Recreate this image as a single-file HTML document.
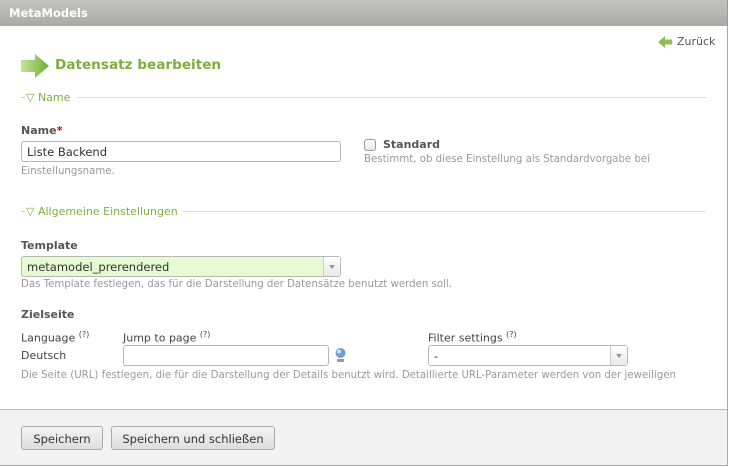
<!DOCTYPE html>
<html><head><meta charset="utf-8"><style>
*{box-sizing:border-box;margin:0;padding:0}
body{width:730px;height:467px;background:#fff;font-family:"DejaVu Sans","Liberation Sans",sans-serif;font-size:11px;color:#444;position:relative;overflow:hidden}
.a{position:absolute;white-space:nowrap}
.hdr{left:0;top:0;width:728px;height:26px;background:linear-gradient(#c4c4c2,#a9a9a7);color:#fff;font-weight:bold;font-size:11.5px;padding:6px 0 0 9px;border-right:1px solid #999}
.frame{left:0;top:26px;width:728px;height:440px;border-right:1px solid #aaa;border-bottom:1px solid #aaa}
.leg{color:#7fae3f;font-size:11px}
.line{height:1px;background:#ddd}
.lbl{font-weight:bold;color:#555;font-size:11px}
.tip{color:#999;font-size:10.2px}
.inp{border:1px solid #b7b7b7;border-radius:3px;background:#fff;height:21px;font-size:11.5px;color:#333;padding:3px 0 0 5px}
.sel .arr{position:absolute;right:0;top:0;width:17px;height:19px;border-left:1px solid #ccc;background:linear-gradient(#fff,#e9e9e9)}
.sel .arr:after{content:"";position:absolute;left:5px;top:8px;border:3px solid transparent;border-top:4px solid #999}
.btn{border:1px solid #aaa;border-radius:3px;background:linear-gradient(#f4f4f4,#dedede);height:24px;font-size:11.5px;color:#333;text-align:center;padding-top:5px}
sup{font-size:8px}
</style></head><body>
<div class="a hdr">MetaModels</div>
<div class="a frame"></div>
<svg class="a" style="left:658px;top:36px" width="14" height="12"><path d="M0 6 L7 0 V3.5 H14 V8.5 H7 V12 Z" fill="#8cc152"/></svg>
<div class="a" style="left:677px;top:35px;color:#555">Zurück</div>
<svg class="a" style="left:20px;top:53px" width="30" height="26"><defs><linearGradient id="g" x1="0" x2="1"><stop offset="0" stop-color="#c4e59a"/><stop offset="1" stop-color="#6fae2f"/></linearGradient></defs><path d="M1 7 H15 V1 L29 13 L15 25 V19 H1 Z" fill="url(#g)"/></svg>
<div class="a" style="left:55px;top:57px;color:#7fae3f;font-weight:bold;font-size:13.6px">Datensatz bearbeiten</div>
<div class="a line" style="left:21px;top:97px;width:4px;background:#ccc"></div>
<div class="a leg" style="left:26px;top:91px">▽ Name</div>
<div class="a line" style="left:77px;top:97px;width:629px"></div>
<div class="a lbl" style="left:21px;top:124px">Name<span style="color:#e00">*</span></div>
<div class="a inp" style="left:21px;top:141px;width:320px">Liste Backend</div>
<div class="a tip" style="left:21px;top:166px">Einstellungsname.</div>
<div class="a" style="left:364px;top:139px;width:12px;height:12px;border:1px solid #999;border-radius:3px;background:linear-gradient(#fff,#e6e6e6)"></div>
<div class="a lbl" style="left:383px;top:138px">Standard</div>
<div class="a tip" style="left:364px;top:154px">Bestimmt, ob diese Einstellung als Standardvorgabe bei</div>
<div class="a line" style="left:21px;top:211px;width:4px;background:#ccc"></div>
<div class="a leg" style="left:26px;top:205px">▽ Allgemeine Einstellungen</div>
<div class="a line" style="left:183px;top:211px;width:523px"></div>
<div class="a lbl" style="left:21px;top:239px">Template</div>
<div class="a inp sel" style="left:21px;top:256px;width:320px;background:#e6fad2">metamodel_prerendered<div class="arr"></div></div>
<div class="a tip" style="left:21px;top:279px">Das Template festlegen, das für die Darstellung der Datensätze benutzt werden soll.</div>
<div class="a lbl" style="left:21px;top:308px">Zielseite</div>
<div class="a" style="left:21px;top:330px">Language <sup>(?)</sup></div>
<div class="a" style="left:123px;top:330px">Jump to page <sup>(?)</sup></div>
<div class="a" style="left:428px;top:330px">Filter settings <sup>(?)</sup></div>
<div class="a" style="left:21px;top:349px">Deutsch</div>
<div class="a inp" style="left:123px;top:345px;width:206px"></div>
<svg class="a" style="left:334px;top:347px" width="13" height="16"><circle cx="6.5" cy="6" r="5" fill="#6d9fd0"/><circle cx="5" cy="4.5" r="2" fill="#cfe3f5"/><rect x="3" y="12" width="7" height="3" fill="#999"/></svg>
<div class="a inp sel" style="left:428px;top:345px;width:200px">-<div class="arr"></div></div>
<div class="a tip" style="left:21px;top:370px">Die Seite (URL) festlegen, die für die Darstellung der Details benutzt wird. Detaillierte URL-Parameter werden von der jeweiligen</div>
<div class="a" style="left:0;top:409px;width:727px;height:56px;background:#f2f2f2;border-top:1px solid #bbb"></div>
<div class="a btn" style="left:21px;top:426px;width:82px">Speichern</div>
<div class="a btn" style="left:111px;top:426px;width:164px">Speichern und schließen</div>
</body></html>
